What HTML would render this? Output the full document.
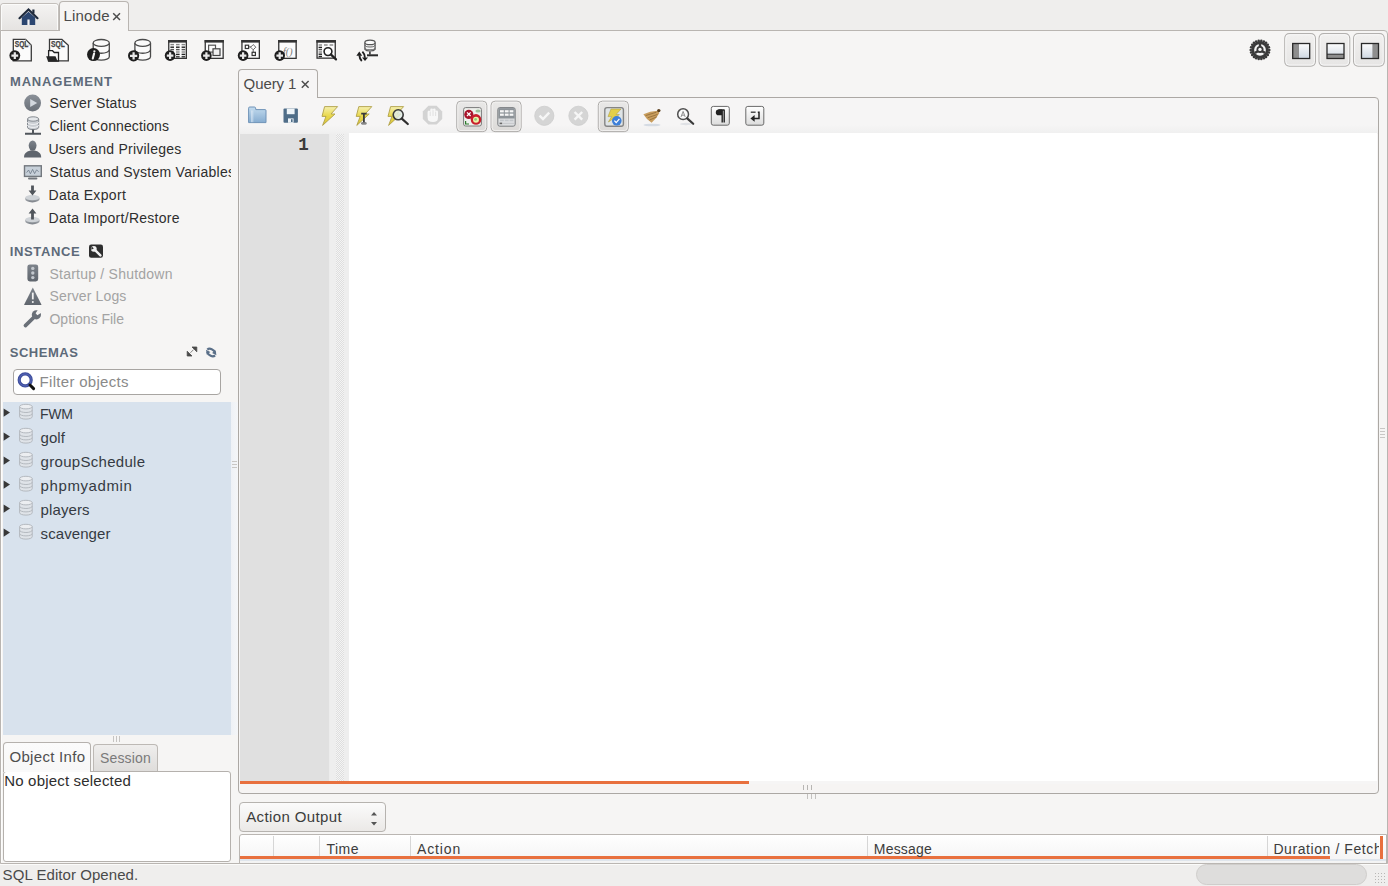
<!DOCTYPE html>
<html><head><meta charset="utf-8">
<style>
html,body{margin:0;padding:0}
body{width:1388px;height:886px;overflow:hidden;position:relative;background:#efeeed;font-family:"Liberation Sans",sans-serif}
.a{position:absolute;box-sizing:border-box}
.t{position:absolute;white-space:nowrap;font-family:"Liberation Sans",sans-serif}
svg{position:absolute;overflow:visible}
</style></head><body>
<!-- tab bar -->
<div class="a" style="left:0;top:0;width:1388px;height:31px;background:#efeeed"></div>
<div class="a" style="left:0;top:3px;width:59px;height:28px;border:1px solid #c3bfbb;border-bottom:none;border-radius:4px 4px 0 0;background:linear-gradient(#f4f3f2,#e5e3e1)"></div>
<div class="a" style="left:1px;top:4px;width:57px;height:26px;border:1px solid #fbfbfa;border-bottom:none;border-radius:3px 3px 0 0;"></div>
<!-- main frame -->
<div class="a" style="left:0;top:30px;width:1388px;height:834px;border:1px solid #b9b5b1;border-radius:0 4px 0 0;background:#f6f5f4"></div>
<div class="a" style="left:1px;top:31px;width:1px;height:831px;background:#fdfdfc"></div>
<!-- Linode tab -->
<div class="a" style="left:59px;top:1px;width:70px;height:30px;border:1px solid #b9b5b1;border-bottom:none;border-radius:4px 4px 0 0;background:#f6f5f4"></div>
<div class="a" style="left:60px;top:30px;width:68px;height:2px;background:#f6f5f4"></div>

<!-- sidebar -->
<div class="a" style="left:231px;top:402px;width:7px;height:333px;background:linear-gradient(90deg,#eef1f6,#f5f6f8)"></div>
<div class="a" style="left:3px;top:402px;width:228px;height:333px;background:#d8e2ed"></div>
<div class="a" style="left:13px;top:369px;width:208px;height:26px;border:1px solid #a8a5a2;border-radius:4px;background:#fff"></div>
<!-- object info / session tabs -->
<div class="a" style="left:93px;top:744px;width:65px;height:28px;border:1px solid #bdb9b5;border-bottom:none;border-radius:4px 4px 0 0;background:linear-gradient(#efeeed,#dedcda)"></div>
<div class="a" style="left:3px;top:771px;width:228px;height:91px;border:1px solid #b5b1ad;border-radius:3px;background:#fff"></div>
<div class="a" style="left:3px;top:742px;width:88px;height:30px;border:1px solid #b5b1ad;border-bottom:none;border-radius:4px 4px 0 0;background:linear-gradient(#fbfbfb,#f7f7f7)"></div>
<div class="a" style="left:4px;top:770px;width:86px;height:2px;background:#fafafa"></div>
<!-- splitter grip sidebar bottom -->
<div class="a" style="left:113px;top:736px;width:9px;height:6px;background:repeating-linear-gradient(90deg,#c6c4c2 0 1px,transparent 1px 3px)"></div>
<div class="a" style="left:232px;top:461px;width:5px;height:9px;background:repeating-linear-gradient(180deg,#c9c7c5 0 1px,transparent 1px 3px)"></div>

<!-- query tab + editor frame -->
<div class="a" style="left:238px;top:97px;width:1141px;height:697px;border:1px solid #aca8a4;border-radius:0 4px 4px 4px;background:#f6f5f5"></div>
<div class="a" style="left:238px;top:69px;width:80px;height:29px;border:1px solid #afaba7;border-bottom:none;border-radius:4px 4px 0 0;background:#f6f5f5"></div>
<div class="a" style="left:239px;top:96px;width:78px;height:3px;background:#f6f5f5"></div>
<div class="a" style="left:239px;top:125px;width:1139px;height:9px;background:linear-gradient(#f6f5f5,#efefef)"></div>
<!-- editor -->
<div class="a" style="left:349px;top:133px;width:1028px;height:648px;background:#fff"></div>
<div class="a" style="left:240px;top:134px;width:90px;height:647px;background:#e0e0e0"></div>
<div class="a" style="left:330px;top:134px;width:19px;height:647px;background:#eeeeee"></div><div class="a" style="left:329px;top:134px;width:1px;height:647px;background:#ececec"></div>
<div class="a" style="left:336px;top:134px;width:8px;height:647px;background-image:linear-gradient(45deg,#dedede 25%,transparent 25%,transparent 75%,#dedede 75%),linear-gradient(45deg,#dedede 25%,transparent 25%,transparent 75%,#dedede 75%);background-size:2px 2px;background-position:0 0,1px 1px;background-color:#f4f4f4"></div>
<div class="a" style="left:240px;top:781px;width:509px;height:3px;background:#e8703e"></div>
<div class="a" style="left:240px;top:784px;width:1136px;height:8px;background:#f6f4f3"></div>
<!-- splitter grips -->
<div class="a" style="left:803px;top:785px;width:9px;height:5px;background:repeating-linear-gradient(90deg,#b7b5b3 0 1px,transparent 1px 4px)"></div>
<div class="a" style="left:807px;top:794px;width:9px;height:5px;background:repeating-linear-gradient(90deg,#c3c1bf 0 1px,transparent 1px 4px)"></div>

<!-- action output combo -->
<div class="a" style="left:239px;top:802px;width:147px;height:30px;border:1px solid #b6b3af;border-radius:4px;background:linear-gradient(#fbfbfb,#ebe9e7)"></div>
<svg style="left:370px;top:811px" width="9" height="16"><path d="M1 4.5 L4 1 L7 4.5Z M1 11 L4 14.5 L7 11Z" fill="#555"/></svg>
<!-- output table -->
<div class="a" style="left:239px;top:834px;width:1148px;height:30px;border:1px solid #bab6b2;border-radius:3px 0 0 0;background:linear-gradient(#ffffff,#f3f3f3)"></div>
<div class="a" style="left:273px;top:836px;width:1px;height:21px;background:#d6d6d6"></div>
<div class="a" style="left:319px;top:836px;width:1px;height:21px;background:#d6d6d6"></div>
<div class="a" style="left:410px;top:836px;width:1px;height:21px;background:#d6d6d6"></div>
<div class="a" style="left:867px;top:836px;width:1px;height:21px;background:#d6d6d6"></div>
<div class="a" style="left:1267px;top:836px;width:1px;height:21px;background:#d6d6d6"></div>
<div class="a" style="left:240px;top:856px;width:1090px;height:3px;background:#e8703e"></div>
<div class="a" style="left:1380px;top:836px;width:3px;height:23px;background:#e8703e"></div>
<div class="a" style="left:240px;top:859px;width:1146px;height:2px;background:#dfe5ec"></div>
<div class="a" style="left:0;top:864px;width:1388px;height:1px;background:#fbfbfa"></div>
<!-- status bar -->
<div class="a" style="left:1196px;top:864px;width:171px;height:21px;border:1px solid #cfcdcb;border-radius:11px;background:#dedddc"></div>
<div class="a" style="left:1374px;top:872px;width:13px;height:13px;background:radial-gradient(circle,#b9b7b5 0.6px,transparent 0.9px);background-size:3px 3px"></div>

<div class="a" style="left:1380px;top:428px;width:5px;height:11px;background:repeating-linear-gradient(180deg,#c9c7c5 0 1px,transparent 1px 3px)"></div>
<svg style="left:0;top:0" width="1388" height="886" viewBox="0 0 1388 886"><path d="M19.5 18.2 L28.5 9.5 L37.5 18.2" fill="none" stroke="#1f2a3c" stroke-width="2.2" stroke-linecap="round"/><rect x="32.3" y="9.5" width="2.2" height="4" fill="#1f2a3c"/><path d="M21.8 17.5 L28.5 11.8 L35.2 17.5 V25 H21.8 Z" fill="#2c4670"/><rect x="27.4" y="19.5" width="2.2" height="5.5" fill="#f4f4f6"/><path d="M13.3 39.4 H25.6 L31.3 45.2 V60.9 H13.3 Z" fill="#fbfbfb" stroke="#3a3a3a" stroke-width="1.3"/><path d="M25.6 39.4 V45.2 H31.3" fill="none" stroke="#bbb" stroke-width="0.8"/><text x="14.8" y="47.1" font-family="Liberation Sans" font-weight="700" font-size="8.6" fill="#444" stroke="#444" stroke-width="0.25" textLength="13.6" lengthAdjust="spacingAndGlyphs">SQL</text><circle cx="14.8" cy="55.6" r="5.4" fill="#1e1e1e"/><path d="M14.8 52.2 V59.0 M11.4 55.6 H18.200000000000003" stroke="#e8e8e8" stroke-width="2.2"/><path d="M49.5 39.4 H61.9 L68.3 45.2 V60.9 H49.5 Z" fill="#fbfbfb" stroke="#3a3a3a" stroke-width="1.3"/><text x="51" y="47.1" font-family="Liberation Sans" font-weight="700" font-size="8.6" fill="#444" stroke="#444" stroke-width="0.25" textLength="13.8" lengthAdjust="spacingAndGlyphs">SQL</text><path d="M48.6 61 V50.7 H52.5 L54.3 52.5 H58.5 V61 Z" fill="#fbfbfb" stroke="#222" stroke-width="1.3"/><path d="M46.2 56.3 H55.5 L57.6 61.2 H48 Z" fill="#262626"/><path d="M93.2 42.9 V56.800000000000004 A8.049999999999997 3.4 0 0 0 109.3 56.800000000000004 V42.9" fill="#fafafa" stroke="#4a4a4a" stroke-width="1.3"/><ellipse cx="101.25" cy="42.9" rx="8.049999999999997" ry="3.4" fill="#fafafa" stroke="#4a4a4a" stroke-width="1.3"/><path d="M93.2 49.85 A8.049999999999997 3.4 0 0 0 109.3 49.85" fill="none" stroke="#4a4a4a" stroke-width="1.3"/><circle cx="93.5" cy="54.6" r="6.5" fill="#1e1e1e"/><circle cx="94.4" cy="51.3" r="1.15" fill="#f2f2f2"/><path d="M94.1 53.6 L92.8 58.6" stroke="#f2f2f2" stroke-width="2.1" stroke-linecap="round"/><path d="M134.9 42.9 V56.800000000000004 A7.799999999999997 3.4 0 0 0 150.5 56.800000000000004 V42.9" fill="#fafafa" stroke="#4a4a4a" stroke-width="1.3"/><ellipse cx="142.7" cy="42.9" rx="7.799999999999997" ry="3.4" fill="#fafafa" stroke="#4a4a4a" stroke-width="1.3"/><path d="M134.9 49.85 A7.799999999999997 3.4 0 0 0 150.5 49.85" fill="none" stroke="#4a4a4a" stroke-width="1.3"/><circle cx="133.6" cy="55.8" r="5.6" fill="#1e1e1e"/><path d="M133.6 52.199999999999996 V59.4 M130.0 55.8 H137.2" stroke="#e8e8e8" stroke-width="2.2"/><rect x="168.75" y="40.65" width="17.600000000000005" height="17.7" fill="#fbfbfb" stroke="#333" stroke-width="1.3"/><rect x="168.1" y="40" width="18.900000000000006" height="2.6" fill="#333"/><rect x="170.4" y="43.9" width="3.6" height="1.4" fill="#888"/><rect x="176" y="43.9" width="3.6" height="1.4" fill="#888"/><rect x="181.6" y="43.9" width="3.6" height="1.4" fill="#888"/><rect x="170.4" y="46.5" width="3.6" height="1.4" fill="#222"/><rect x="176" y="46.5" width="3.6" height="1.4" fill="#222"/><rect x="181.6" y="46.5" width="3.6" height="1.4" fill="#222"/><rect x="170.4" y="48.9" width="3.6" height="1.4" fill="#555"/><rect x="176" y="48.9" width="3.6" height="1.4" fill="#555"/><rect x="181.6" y="48.9" width="3.6" height="1.4" fill="#555"/><rect x="170.4" y="51.3" width="3.6" height="1.4" fill="#888"/><rect x="176" y="51.3" width="3.6" height="1.4" fill="#888"/><rect x="181.6" y="51.3" width="3.6" height="1.4" fill="#888"/><rect x="170.4" y="53.699999999999996" width="3.6" height="1.4" fill="#222"/><rect x="176" y="53.699999999999996" width="3.6" height="1.4" fill="#222"/><rect x="181.6" y="53.699999999999996" width="3.6" height="1.4" fill="#222"/><rect x="170.4" y="56.099999999999994" width="3.6" height="1.4" fill="#333"/><rect x="176" y="56.099999999999994" width="3.6" height="1.4" fill="#333"/><rect x="181.6" y="56.099999999999994" width="3.6" height="1.4" fill="#333"/><circle cx="170.1" cy="55.6" r="5.3" fill="#1e1e1e"/><path d="M170.1 52.300000000000004 V58.9 M166.79999999999998 55.6 H173.4" stroke="#e8e8e8" stroke-width="2.2"/><rect x="205.25" y="40.65" width="17.900000000000016" height="17.7" fill="#fbfbfb" stroke="#333" stroke-width="1.3"/><rect x="204.6" y="40" width="19.200000000000017" height="2.6" fill="#333"/><rect x="208.6" y="45.2" width="6.9" height="6.9" fill="none" stroke="#555" stroke-width="1.2"/><rect x="213" y="48.8" width="7" height="6.7" fill="#f0f0f0" stroke="#444" stroke-width="1.2"/><circle cx="206.4" cy="55.6" r="5.3" fill="#1e1e1e"/><path d="M206.4 52.300000000000004 V58.9 M203.1 55.6 H209.70000000000002" stroke="#e8e8e8" stroke-width="2.2"/><rect x="241.95000000000002" y="40.65" width="17.399999999999988" height="17.7" fill="#fbfbfb" stroke="#333" stroke-width="1.3"/><rect x="241.3" y="40" width="18.69999999999999" height="2.6" fill="#333"/><rect x="245.3" y="45.2" width="3.3" height="3.3" fill="#fff" stroke="#333" stroke-width="1.2"/><path d="M248.6 46.9 H251 M253.2 44.6 L255.8 47.2 L253.2 49.8 L250.6 47.2 Z M253.2 49.8 V52.2" fill="none" stroke="#555" stroke-width="0.9"/><rect x="252.1" y="52.3" width="3.3" height="3.2" fill="#fff" stroke="#333" stroke-width="1.2"/><circle cx="243.1" cy="55.6" r="5.3" fill="#1e1e1e"/><path d="M243.1 52.300000000000004 V58.9 M239.79999999999998 55.6 H246.4" stroke="#e8e8e8" stroke-width="2.2"/><rect x="278.75" y="40.65" width="17.399999999999988" height="17.7" fill="#fbfbfb" stroke="#333" stroke-width="1.3"/><rect x="278.1" y="40" width="18.69999999999999" height="2.6" fill="#333"/><text x="283" y="55" font-family="Liberation Serif" font-style="italic" font-size="10" fill="#777" textLength="9.5" lengthAdjust="spacingAndGlyphs">f()</text><circle cx="279.7" cy="55.6" r="5.3" fill="#1e1e1e"/><path d="M279.7 52.300000000000004 V58.9 M276.4 55.6 H283.0" stroke="#e8e8e8" stroke-width="2.2"/><rect x="317.04999999999995" y="40.75" width="18.2" height="17.399999999999995" fill="#fbfbfb" stroke="#333" stroke-width="1.3"/><rect x="316.4" y="40.1" width="19.5" height="2.6" fill="#333"/><rect x="318.6" y="44.3" width="3.4" height="1.4" fill="#888"/><rect x="318.6" y="46.699999999999996" width="3.4" height="1.4" fill="#222"/><rect x="318.6" y="48.9" width="3.4" height="1.4" fill="#555"/><rect x="318.6" y="51.3" width="3.4" height="1.4" fill="#888"/><rect x="318.6" y="53.5" width="3.4" height="1.4" fill="#222"/><rect x="318.6" y="55.8" width="3.4" height="1.4" fill="#222"/><rect x="324" y="44.3" width="3.6" height="1.4" fill="#888"/><rect x="329.6" y="44.3" width="3.6" height="1.4" fill="#888"/><circle cx="328" cy="51.6" r="3.9" fill="#fff" stroke="#222" stroke-width="1.6"/><path d="M330.8 54.4 L336 59.4" stroke="#222" stroke-width="2.2" stroke-linecap="round"/><path d="M364.9 42.4 V49.4 A5.4 2.4 0 0 0 375.1 49.4 V42.4" fill="#f6f6f6" stroke="#555" stroke-width="1.2"/><ellipse cx="370" cy="42.4" rx="5.1" ry="2.2" fill="#fbfbfb" stroke="#555" stroke-width="1.2"/><path d="M364.9 44.8 A5.1 2.2 0 0 0 375.1 44.8 M364.9 47.6 A5.1 2.2 0 0 0 375.1 47.6" fill="none" stroke="#666" stroke-width="1"/><path d="M369.9 51.6 V54.6" stroke="#333" stroke-width="1.6"/><path d="M367 55.3 H378" stroke="#2a2a2a" stroke-width="2"/><path d="M356.4 55.8 L359.3 51.4 L362.2 55.8 Z" fill="#1e1e1e"/><path d="M359.4 55.4 Q359.6 59 361.8 61" fill="none" stroke="#1e1e1e" stroke-width="1.9"/><path d="M362 57.4 L365 61 L368 57.4 Z" fill="#1e1e1e"/><path d="M364.9 57.8 Q364.6 53.6 362.4 51.6" fill="none" stroke="#1e1e1e" stroke-width="1.9"/><g><circle cx="1269.30" cy="49.90" r="1.25" fill="#3a3a3a"/><circle cx="1268.92" cy="52.52" r="1.25" fill="#3a3a3a"/><circle cx="1267.82" cy="54.93" r="1.25" fill="#3a3a3a"/><circle cx="1266.09" cy="56.93" r="1.25" fill="#3a3a3a"/><circle cx="1263.86" cy="58.36" r="1.25" fill="#3a3a3a"/><circle cx="1261.32" cy="59.11" r="1.25" fill="#3a3a3a"/><circle cx="1258.68" cy="59.11" r="1.25" fill="#3a3a3a"/><circle cx="1256.14" cy="58.36" r="1.25" fill="#3a3a3a"/><circle cx="1253.91" cy="56.93" r="1.25" fill="#3a3a3a"/><circle cx="1252.18" cy="54.93" r="1.25" fill="#3a3a3a"/><circle cx="1251.08" cy="52.52" r="1.25" fill="#3a3a3a"/><circle cx="1250.70" cy="49.90" r="1.25" fill="#3a3a3a"/><circle cx="1251.08" cy="47.28" r="1.25" fill="#3a3a3a"/><circle cx="1252.18" cy="44.87" r="1.25" fill="#3a3a3a"/><circle cx="1253.91" cy="42.87" r="1.25" fill="#3a3a3a"/><circle cx="1256.14" cy="41.44" r="1.25" fill="#3a3a3a"/><circle cx="1258.68" cy="40.69" r="1.25" fill="#3a3a3a"/><circle cx="1261.32" cy="40.69" r="1.25" fill="#3a3a3a"/><circle cx="1263.86" cy="41.44" r="1.25" fill="#3a3a3a"/><circle cx="1266.09" cy="42.87" r="1.25" fill="#3a3a3a"/><circle cx="1267.82" cy="44.87" r="1.25" fill="#3a3a3a"/><circle cx="1268.92" cy="47.28" r="1.25" fill="#3a3a3a"/><circle cx="1260" cy="49.9" r="8.9" fill="#3a3a3a"/><circle cx="1260" cy="49.9" r="5.9" fill="#f4f4f4"/><path d="M1260 44 V47.4 M1255 52.9 L1257.8 51.3 M1265 52.9 L1262.2 51.3" stroke="#3a3a3a" stroke-width="2.4"/><circle cx="1260" cy="49.6" r="3.5" fill="#3a3a3a"/><circle cx="1260" cy="49.4" r="1.7" fill="#f4f4f4"/></g><defs><linearGradient id="gLay" x1="0" y1="0" x2="0" y2="1"><stop offset="0" stop-color="#f1f0ef"/><stop offset="1" stop-color="#e6e5e4"/></linearGradient></defs><rect x="1284.8" y="33.7" width="30.6" height="32.4" rx="4.5" fill="url(#gLay)" stroke="#b3b1af" stroke-width="1.2"/><rect x="1285.8" y="34.7" width="28.6" height="30.4" rx="3.5" fill="none" stroke="#f9f9f9" stroke-width="1"/><defs><linearGradient id="scrL" x1="0" y1="0" x2="0" y2="1"><stop offset="0" stop-color="#fdfdfd"/><stop offset="1" stop-color="#cfd8e2"/></linearGradient></defs><rect x="1292.6999999999998" y="43.5" width="17" height="15" fill="url(#scrL)"/><rect x="1292.6999999999998" y="43.5" width="6.3" height="15" fill="#8e8e8e"/><rect x="1292.6999999999998" y="43.5" width="17" height="15" fill="none" stroke="#2a2a2a" stroke-width="1.3"/><rect x="1319.1" y="33.7" width="30.6" height="32.4" rx="4.5" fill="url(#gLay)" stroke="#b3b1af" stroke-width="1.2"/><rect x="1320.1" y="34.7" width="28.6" height="30.4" rx="3.5" fill="none" stroke="#f9f9f9" stroke-width="1"/><defs><linearGradient id="scrB" x1="0" y1="0" x2="0" y2="1"><stop offset="0" stop-color="#fdfdfd"/><stop offset="1" stop-color="#cfd8e2"/></linearGradient></defs><rect x="1326.9999999999998" y="43.5" width="17" height="15" fill="url(#scrB)"/><rect x="1326.9999999999998" y="54.2" width="17" height="4.3" fill="#8e8e8e"/><rect x="1326.9999999999998" y="43.5" width="17" height="15" fill="none" stroke="#2a2a2a" stroke-width="1.3"/><path d="M1326.9999999999998 54.2 H1343.9999999999998" stroke="#2a2a2a" stroke-width="1"/><rect x="1353.6" y="33.7" width="30.6" height="32.4" rx="4.5" fill="url(#gLay)" stroke="#b3b1af" stroke-width="1.2"/><rect x="1354.6" y="34.7" width="28.6" height="30.4" rx="3.5" fill="none" stroke="#f9f9f9" stroke-width="1"/><defs><linearGradient id="scrR" x1="0" y1="0" x2="0" y2="1"><stop offset="0" stop-color="#fdfdfd"/><stop offset="1" stop-color="#cfd8e2"/></linearGradient></defs><rect x="1361.4999999999998" y="43.5" width="17" height="15" fill="url(#scrR)"/><rect x="1372.3999999999999" y="43.5" width="6.1" height="15" fill="#8e8e8e"/><rect x="1361.4999999999998" y="43.5" width="17" height="15" fill="none" stroke="#2a2a2a" stroke-width="1.3"/><path d="M113.2 13.2 L120 20 M120 13.2 L113.2 20" stroke="#4e4e4e" stroke-width="1.5"/><path d="M301.8 81 L308.6 87.8 M308.6 81 L301.8 87.8" stroke="#4e4e4e" stroke-width="1.5"/><defs><linearGradient id="gPlay" x1="0" y1="0" x2="0" y2="1"><stop offset="0" stop-color="#8a9098"/><stop offset="1" stop-color="#6a7078"/></linearGradient><linearGradient id="gGray" x1="0" y1="0" x2="0" y2="1"><stop offset="0" stop-color="#7d838b"/><stop offset="1" stop-color="#5f656d"/></linearGradient><linearGradient id="gDisk" x1="0" y1="0" x2="0" y2="1"><stop offset="0" stop-color="#d0d3d7"/><stop offset="1" stop-color="#7a7f86"/></linearGradient></defs><circle cx="32.6" cy="103" r="8.4" fill="url(#gPlay)"/><path d="M30.2 99 L37.2 103 L30.2 107 Z" fill="#d3d8de"/><path d="M27.5 119 V127.4 A5.6 2.2 0 0 0 38.7 127.4 V119" fill="#c9cdd2" stroke="#868b91" stroke-width="1"/><ellipse cx="33.1" cy="119" rx="5.6" ry="2.2" fill="#e4e7ea" stroke="#868b91" stroke-width="1"/><path d="M27.5 122.2 A5.6 2.2 0 0 0 38.7 122.2 M27.5 125.2 A5.6 2.2 0 0 0 38.7 125.2" fill="none" stroke="#f2f3f5" stroke-width="1"/><path d="M33 129.6 V133.8 M25 133.8 H41" stroke="#50555b" stroke-width="2"/><ellipse cx="32.6" cy="145.6" rx="3.9" ry="5.2" fill="url(#gGray)"/><path d="M24 157.4 C24 153 27 151.6 30.3 150.6 H34.9 C38.2 151.6 41.2 153 41.2 157.4 Z" fill="#5f656d"/><rect x="24.5" y="165.8" width="16.8" height="10.6" fill="#c7d0d9" stroke="#73787e" stroke-width="1.4"/><path d="M26.6 172.6 L28.6 170 L30.4 173.8 L32.6 169.4 L34.6 173.6 L36.6 169.8 L38.6 171.8" fill="none" stroke="#6d7a88" stroke-width="0.8"/><rect x="28" y="177.5" width="9.4" height="2" rx="1" fill="#73787e"/><ellipse cx="32.4" cy="198.8" rx="7.3" ry="3.6" fill="url(#gDisk)"/><ellipse cx="32.4" cy="197.6" rx="7.1" ry="2.6" fill="#cfd3d7"/><path d="M31.1 185.6 H33.9 V190.6 H36.4 L32.5 195.6 L28.6 190.6 H31.1 Z" fill="#50555b"/><ellipse cx="32.4" cy="220.8" rx="7.3" ry="3.6" fill="url(#gDisk)"/><ellipse cx="32.4" cy="219.6" rx="7.1" ry="2.6" fill="#cfd3d7"/><path d="M31.1 219.4 H33.9 V213.4 H36.4 L32.5 208.4 L28.6 213.4 H31.1 Z" fill="#50555b"/><rect x="89" y="244.6" width="14" height="13.2" rx="2.2" fill="#2e2e2e"/><path d="M94.8 249.8 L100.4 255.4" stroke="#f2f2f2" stroke-width="2.4" stroke-linecap="round"/><circle cx="93.8" cy="248.8" r="2.9" fill="#f2f2f2"/><path d="M91.6 246.2 L93.8 248.6 L91.2 249.8 Z" fill="#2e2e2e"/><rect x="27.4" y="264.4" width="10.8" height="17" rx="2.4" fill="url(#gGray)"/><circle cx="32.8" cy="268.4" r="1.7" fill="#c3c8ce"/><circle cx="32.8" cy="273" r="1.7" fill="#c3c8ce"/><circle cx="32.8" cy="277.6" r="1.7" fill="#c3c8ce"/><path d="M32.8 287.6 L41.4 304.4 Q41.6 305 41 305 H24.6 Q24 305 24.2 304.4 Z" fill="url(#gGray)"/><path d="M32.8 292.6 V299.4" stroke="#f2f2f2" stroke-width="1.8"/><circle cx="32.8" cy="302" r="1" fill="#f2f2f2"/><path d="M25.4 325.6 L33.6 317.6" stroke="#6a7078" stroke-width="3.6" stroke-linecap="round"/><circle cx="36.4" cy="314.8" r="4.6" fill="#6a7078"/><path d="M38.2 309.6 L35.6 313.2 L37.4 315.2 L41.6 312.6 Z" fill="#f6f5f4"/><path d="M192 347 H196.8 V351.8 Z M187.2 356 V351.2 L192 356 Z" fill="#4a4a4a" stroke="#4a4a4a" stroke-width="0.8"/><path d="M190.4 352.8 L193.6 349.6" stroke="#777" stroke-width="0.9"/><g transform="rotate(38 211.2 352.5)"><path d="M206.4 352.6 A4.8 3.6 0 0 1 214.6 350.4" fill="none" stroke="#5a6f88" stroke-width="2.2"/><path d="M213.2 348 L217 351.4 L212.2 352.4 Z" fill="#5a6f88"/><path d="M216 352.4 A4.8 3.6 0 0 1 207.8 354.6" fill="none" stroke="#5a6f88" stroke-width="2.2"/><path d="M209.2 357 L205.4 353.6 L210.2 352.6 Z" fill="#5a6f88"/></g><circle cx="25.2" cy="379.9" r="6" fill="none" stroke="#3f4f9d" stroke-width="3.2"/><circle cx="25.2" cy="379.9" r="6" fill="none" stroke="#6a7ad0" stroke-width="0.8" opacity="0.6"/><path d="M30 385 L33.6 388.6" stroke="#111" stroke-width="3" stroke-linecap="round"/><path d="M3.6 408.40000000000003 L10 412.6 L3.6 416.8 Z" fill="#383838"/><path d="M19.6 406.59999999999997 V416.8 A6.3 2.3 0 0 0 32.2 416.8 V406.59999999999997" fill="#dfe3e8" stroke="#b4b9bf" stroke-width="1"/><ellipse cx="25.9" cy="406.59999999999997" rx="6.3" ry="2.3" fill="#eceef1" stroke="#b4b9bf" stroke-width="1"/><path d="M19.6 410.2 A6.3 2.3 0 0 0 32.2 410.2 M19.6 413.59999999999997 A6.3 2.3 0 0 0 32.2 413.59999999999997" fill="none" stroke="#b4b9bf" stroke-width="1"/><path d="M3.6 432.40000000000003 L10 436.6 L3.6 440.8 Z" fill="#383838"/><path d="M19.6 430.59999999999997 V440.8 A6.3 2.3 0 0 0 32.2 440.8 V430.59999999999997" fill="#dfe3e8" stroke="#b4b9bf" stroke-width="1"/><ellipse cx="25.9" cy="430.59999999999997" rx="6.3" ry="2.3" fill="#eceef1" stroke="#b4b9bf" stroke-width="1"/><path d="M19.6 434.2 A6.3 2.3 0 0 0 32.2 434.2 M19.6 437.59999999999997 A6.3 2.3 0 0 0 32.2 437.59999999999997" fill="none" stroke="#b4b9bf" stroke-width="1"/><path d="M3.6 456.40000000000003 L10 460.6 L3.6 464.8 Z" fill="#383838"/><path d="M19.6 454.59999999999997 V464.8 A6.3 2.3 0 0 0 32.2 464.8 V454.59999999999997" fill="#dfe3e8" stroke="#b4b9bf" stroke-width="1"/><ellipse cx="25.9" cy="454.59999999999997" rx="6.3" ry="2.3" fill="#eceef1" stroke="#b4b9bf" stroke-width="1"/><path d="M19.6 458.2 A6.3 2.3 0 0 0 32.2 458.2 M19.6 461.59999999999997 A6.3 2.3 0 0 0 32.2 461.59999999999997" fill="none" stroke="#b4b9bf" stroke-width="1"/><path d="M3.6 480.40000000000003 L10 484.6 L3.6 488.8 Z" fill="#383838"/><path d="M19.6 478.59999999999997 V488.8 A6.3 2.3 0 0 0 32.2 488.8 V478.59999999999997" fill="#dfe3e8" stroke="#b4b9bf" stroke-width="1"/><ellipse cx="25.9" cy="478.59999999999997" rx="6.3" ry="2.3" fill="#eceef1" stroke="#b4b9bf" stroke-width="1"/><path d="M19.6 482.2 A6.3 2.3 0 0 0 32.2 482.2 M19.6 485.59999999999997 A6.3 2.3 0 0 0 32.2 485.59999999999997" fill="none" stroke="#b4b9bf" stroke-width="1"/><path d="M3.6 504.40000000000003 L10 508.6 L3.6 512.8000000000001 Z" fill="#383838"/><path d="M19.6 502.59999999999997 V512.8 A6.3 2.3 0 0 0 32.2 512.8 V502.59999999999997" fill="#dfe3e8" stroke="#b4b9bf" stroke-width="1"/><ellipse cx="25.9" cy="502.59999999999997" rx="6.3" ry="2.3" fill="#eceef1" stroke="#b4b9bf" stroke-width="1"/><path d="M19.6 506.2 A6.3 2.3 0 0 0 32.2 506.2 M19.6 509.59999999999997 A6.3 2.3 0 0 0 32.2 509.59999999999997" fill="none" stroke="#b4b9bf" stroke-width="1"/><path d="M3.6 528.4 L10 532.6 L3.6 536.8000000000001 Z" fill="#383838"/><path d="M19.6 526.6 V536.8000000000001 A6.3 2.3 0 0 0 32.2 536.8000000000001 V526.6" fill="#dfe3e8" stroke="#b4b9bf" stroke-width="1"/><ellipse cx="25.9" cy="526.6" rx="6.3" ry="2.3" fill="#eceef1" stroke="#b4b9bf" stroke-width="1"/><path d="M19.6 530.2 A6.3 2.3 0 0 0 32.2 530.2 M19.6 533.6 A6.3 2.3 0 0 0 32.2 533.6" fill="none" stroke="#b4b9bf" stroke-width="1"/><defs><linearGradient id="gFold" x1="0" y1="0" x2="0" y2="1"><stop offset="0" stop-color="#c4dcef"/><stop offset="1" stop-color="#86acd0"/></linearGradient><linearGradient id="gBolt" x1="0" y1="0" x2="0" y2="1"><stop offset="0" stop-color="#f6f0b0"/><stop offset="0.5" stop-color="#e9d84a"/><stop offset="1" stop-color="#d8c23a"/></linearGradient><linearGradient id="gTog" x1="0" y1="0" x2="0" y2="1"><stop offset="0" stop-color="#e9e8e7"/><stop offset="1" stop-color="#dcdad8"/></linearGradient><linearGradient id="gBox" x1="0" y1="0" x2="0" y2="1"><stop offset="0" stop-color="#ffffff"/><stop offset="1" stop-color="#dcdcdc"/></linearGradient></defs><path d="M248.6 122.6 V108.2 Q248.6 107 249.8 107 H254.4 Q255.4 107 255.6 108 L255.8 109.6 H265 Q266 109.6 266 110.6 V122.6 Z" fill="url(#gFold)" stroke="#7093b8" stroke-width="1"/><path d="M251.6 110.4 V122.2 M252.8 110.4 V122.2" stroke="#e6f0f8" stroke-width="0.6"/><rect x="283.5" y="108.4" width="14.4" height="14.4" rx="1" fill="#4f6d88"/><rect x="286.8" y="108.6" width="7.8" height="5.6" fill="#eef4f8"/><rect x="288" y="118.4" width="5.6" height="4.4" fill="#eef4f8"/><rect x="291" y="119.2" width="1.6" height="2.8" fill="#4f6d88"/><path d="M324.6 106.6 H337.6 L331 114 H335 L322.6 125.4 L326 116.4 H322 Z" fill="url(#gBolt)" stroke="#b0a048" stroke-width="0.9" stroke-linejoin="round"/><path d="M358.8 106.6 H371.8 L365.2 114 H369.2 L356.8 125.4 L360.2 116.4 H356.2 Z" fill="url(#gBolt)" stroke="#b0a048" stroke-width="0.9" stroke-linejoin="round"/><path d="M361.2 113.6 H366.6 M363.9 113.6 V123.4 M361.4 123.4 H366.4" stroke="#3a3a3a" stroke-width="1.8"/><ellipse cx="363.9" cy="123.4" rx="2.4" ry="1.2" fill="#888"/><path d="M390.6 106.6 H403.6 L397 114 H401 L388.6 125.4 L392 116.4 H388 Z" fill="url(#gBolt)" stroke="#b0a048" stroke-width="0.9" stroke-linejoin="round"/><circle cx="398.2" cy="114.8" r="5" fill="#e2ece6" fill-opacity="0.85" stroke="#3a3a3a" stroke-width="1.6"/><path d="M401.8 118.6 L407.8 124" stroke="#2e2e2e" stroke-width="2.2" stroke-linecap="round"/><path d="M428.4 105.8 H436.6 L442.2 111.4 V119 L436.6 124.6 H428.4 L422.8 119 V111.4 Z" fill="#d3d3d3"/><path d="M427.6 112 Q427.6 110.4 429 110.4 Q430.2 110.4 430.2 112 V110 Q430.2 108.6 431.6 108.6 Q433 108.6 433 110 V109.6 Q433 108.4 434.3 108.4 Q435.6 108.4 435.6 109.8 V111.6 Q435.6 110.6 436.8 110.6 Q438 110.6 438 112 V117.4 Q438 122 433 122 Q427.6 122 427.6 117.4 Z" fill="#f7f7f7"/><path d="M430.2 111.8 V116 M433 110.2 V116 M435.6 111.8 V116" stroke="#dadada" stroke-width="0.8"/><rect x="456.8" y="101.2" width="30" height="30.4" rx="4" fill="url(#gTog)" stroke="#a9a7a5" stroke-width="1"/><rect x="457.8" y="102.2" width="28" height="28.4" rx="3" fill="none" stroke="#f2f1f0" stroke-width="1"/><rect x="491.1" y="101.2" width="30" height="30.4" rx="4" fill="url(#gTog)" stroke="#a9a7a5" stroke-width="1"/><rect x="492.1" y="102.2" width="28" height="28.4" rx="3" fill="none" stroke="#f2f1f0" stroke-width="1"/><rect x="598.3" y="101.2" width="30.1" height="30.4" rx="4" fill="url(#gTog)" stroke="#a9a7a5" stroke-width="1"/><rect x="599.3" y="102.2" width="28.1" height="28.4" rx="3" fill="none" stroke="#f2f1f0" stroke-width="1"/><rect x="463.6" y="107.6" width="17.8" height="18.4" rx="2" fill="#eef0ec" stroke="#7a7a7a" stroke-width="1"/><ellipse cx="478" cy="111" rx="2.6" ry="1.6" fill="#9cc49c"/><circle cx="468.8" cy="114.4" r="4.6" fill="#a8142a"/><path d="M467 112.4 L470.6 116 M470.6 112.4 L467 116" stroke="#fff" stroke-width="1.3"/><circle cx="476" cy="119.4" r="5.3" fill="#c8202c"/><circle cx="476" cy="119.8" r="3" fill="#eef2a8"/><circle cx="475.6" cy="119.4" r="1.4" fill="#8fd07a"/><path d="M465.6 121 V124 H469" fill="none" stroke="#2a7a2a" stroke-width="1.2"/><rect x="497.8" y="107.6" width="17.4" height="18.6" rx="2" fill="#dcdee0" stroke="#7c7f82" stroke-width="1"/><rect x="498.3" y="108.1" width="16.4" height="10.4" fill="#8d9398"/><rect x="500" y="110.2" width="3.8" height="2.2" fill="#f6f6f6"/><rect x="500" y="113.6" width="3.8" height="2.2" fill="#f6f6f6"/><rect x="504.8" y="110.2" width="3.8" height="2.2" fill="#f6f6f6"/><rect x="504.8" y="113.6" width="3.8" height="2.2" fill="#f6f6f6"/><rect x="509.6" y="110.2" width="3.8" height="2.2" fill="#f6f6f6"/><rect x="509.6" y="113.6" width="3.8" height="2.2" fill="#f6f6f6"/><rect x="500" y="119.6" width="3.8" height="1.6" fill="#c2c6ca"/><rect x="504.8" y="119.6" width="3.8" height="1.6" fill="#c2c6ca"/><rect x="509.6" y="119.6" width="3.8" height="1.6" fill="#c2c6ca"/><rect x="499.6" y="122.6" width="2.6" height="1.6" fill="#666"/><path d="M503 123.4 H514" stroke="#c6c9cc" stroke-width="1"/><circle cx="544.3" cy="115.8" r="9.6" fill="#d5d5d5" stroke="#cdcdcd" stroke-width="0.8"/><path d="M539.6 115.6 L543 119 L549.2 112.6" fill="none" stroke="#f6f6f6" stroke-width="2.4"/><circle cx="578.4" cy="115.8" r="9.6" fill="#d5d5d5" stroke="#cdcdcd" stroke-width="0.8"/><path d="M574.6 112 L582.2 119.6 M582.2 112 L574.6 119.6" stroke="#f6f6f6" stroke-width="2.4"/><rect x="604.8" y="107.6" width="18.6" height="18.6" rx="2.2" fill="#dfe4e6" stroke="#858585" stroke-width="1.4"/><path d="M611 109 H621 L616 114.6 H619.4 L608.4 122 L611.6 116.6 H608 Z" fill="#e3cf48" stroke="#b0a048" stroke-width="0.6"/><circle cx="616.8" cy="120.8" r="4.8" fill="#3d7fd8"/><path d="M614.4 120.6 L616.2 122.6 L619.4 118.8" fill="none" stroke="#fff" stroke-width="1.3"/><ellipse cx="652" cy="125" rx="8.5" ry="1.3" fill="#cdd5de" opacity="0.8"/><path d="M643.4 114.2 Q650 111 657.6 110.8 L659.4 113 Q656.6 118.4 651.6 122.8 Q646.2 119.2 643.4 114.2 Z" fill="#c99e5e"/><path d="M645.6 115.6 L656.4 112.2 M647.6 117.8 L657.6 114.4 M649.6 120 L656.8 116.8" stroke="#8f6a36" stroke-width="0.8"/><circle cx="658.8" cy="110.6" r="1.7" fill="#5a3e1c"/><ellipse cx="686" cy="124" rx="6" ry="1.2" fill="#d5d9de" opacity="0.7"/><circle cx="683.1" cy="114.2" r="5.4" fill="#fbfbfb" stroke="#505050" stroke-width="1.5"/><path d="M681 117 L683.1 111.4 L685.2 117 M681.8 115.2 H684.4" fill="none" stroke="#777" stroke-width="0.8"/><path d="M687.2 118.4 L693.2 123.8" stroke="#3a3a3a" stroke-width="2.2" stroke-linecap="round"/><rect x="711.3" y="106.4" width="18" height="18.8" rx="2" fill="url(#gBox)" stroke="#6a6a6a" stroke-width="1"/><rect x="745.8" y="106.4" width="18" height="18.8" rx="2" fill="url(#gBox)" stroke="#6a6a6a" stroke-width="1"/><path d="M718.4 110 H724.6 M722.2 110 V122.6 M724.2 110 V122.6" stroke="#222" stroke-width="1.4"/><path d="M718.6 109.6 A2.8 2.8 0 0 0 718.6 115.2 H722 V109.6 Z" fill="#222"/><path d="M750.8 112.2 H755.6" stroke="#333" stroke-width="1.3"/><path d="M757.8 112.2 H759 V118.4 H753.8" fill="none" stroke="#222" stroke-width="1.5"/><path d="M750.4 118.4 L754.6 115 V121.8 Z" fill="#222"/><text x="298.2" y="150" font-family="Liberation Mono" font-weight="700" font-size="17.5" fill="#3a3a3a">1</text></svg>
<div class="t" style="left:63.50px;top:8.30px;font-size:15px;line-height:15px;font-weight:400;color:#4b4b4b;letter-spacing:0.200px">Linode</div>
<div class="t" style="left:10.00px;top:75.00px;font-size:13px;line-height:13px;font-weight:700;color:#5d6a79;letter-spacing:0.815px">MANAGEMENT</div>
<div class="t" style="left:49.50px;top:96.15px;font-size:14px;line-height:14px;font-weight:400;color:#2e2e2e;letter-spacing:0.191px">Server Status</div>
<div class="t" style="left:49.50px;top:119.15px;font-size:14px;line-height:14px;font-weight:400;color:#2e2e2e;letter-spacing:0.117px">Client Connections</div>
<div class="t" style="left:48.50px;top:142.15px;font-size:14px;line-height:14px;font-weight:400;color:#2e2e2e;letter-spacing:0.227px">Users and Privileges</div>
<div class="t" style="left:49.50px;top:165.15px;font-size:14px;line-height:14px;font-weight:400;color:#2e2e2e;letter-spacing:0.261px;width:181.5px;overflow:hidden">Status and System Variables</div>
<div class="t" style="left:48.50px;top:188.15px;font-size:14px;line-height:14px;font-weight:400;color:#2e2e2e;letter-spacing:0.337px">Data Export</div>
<div class="t" style="left:48.50px;top:211.15px;font-size:14px;line-height:14px;font-weight:400;color:#2e2e2e;letter-spacing:0.280px">Data Import/Restore</div>
<div class="t" style="left:9.70px;top:245.00px;font-size:13px;line-height:13px;font-weight:700;color:#5d6a79;letter-spacing:0.641px">INSTANCE</div>
<div class="t" style="left:49.50px;top:267.15px;font-size:14px;line-height:14px;font-weight:400;color:#a3a3a3;letter-spacing:0.230px">Startup / Shutdown</div>
<div class="t" style="left:49.50px;top:289.15px;font-size:14px;line-height:14px;font-weight:400;color:#a3a3a3;letter-spacing:0.132px">Server Logs</div>
<div class="t" style="left:49.50px;top:312.15px;font-size:14px;line-height:14px;font-weight:400;color:#a3a3a3;letter-spacing:-0.019px">Options File</div>
<div class="t" style="left:9.70px;top:346.00px;font-size:13px;line-height:13px;font-weight:700;color:#5d6a79;letter-spacing:0.527px">SCHEMAS</div>
<div class="t" style="left:39.60px;top:374.30px;font-size:15px;line-height:15px;font-weight:400;color:#8a8a8a;letter-spacing:0.298px">Filter objects</div>
<div class="t" style="left:39.90px;top:407.15px;font-size:14px;line-height:14px;font-weight:400;color:#353a42;letter-spacing:-0.183px">FWM</div>
<div class="t" style="left:40.60px;top:430.30px;font-size:15px;line-height:15px;font-weight:400;color:#353a42;letter-spacing:0.028px">golf</div>
<div class="t" style="left:40.60px;top:454.30px;font-size:15px;line-height:15px;font-weight:400;color:#353a42;letter-spacing:0.294px">groupSchedule</div>
<div class="t" style="left:40.60px;top:478.30px;font-size:15px;line-height:15px;font-weight:400;color:#353a42;letter-spacing:0.585px">phpmyadmin</div>
<div class="t" style="left:40.60px;top:502.30px;font-size:15px;line-height:15px;font-weight:400;color:#353a42;letter-spacing:0.091px">players</div>
<div class="t" style="left:40.60px;top:526.30px;font-size:15px;line-height:15px;font-weight:400;color:#353a42;letter-spacing:0.074px">scavenger</div>
<div class="t" style="left:9.50px;top:749.30px;font-size:15px;line-height:15px;font-weight:400;color:#4f4f4f;letter-spacing:0.300px">Object Info</div>
<div class="t" style="left:100.00px;top:751.15px;font-size:14px;line-height:14px;font-weight:400;color:#7a7a7a;letter-spacing:0.163px">Session</div>
<div class="t" style="left:4.20px;top:773.30px;font-size:15px;line-height:15px;font-weight:400;color:#2e2e2e;letter-spacing:0.190px">No object selected</div>
<div class="t" style="left:2.60px;top:867.30px;font-size:15px;line-height:15px;font-weight:400;color:#4a4a4a;letter-spacing:0.058px">SQL Editor Opened.</div>
<div class="t" style="left:243.60px;top:76.30px;font-size:15px;line-height:15px;font-weight:400;color:#4b4b4b;letter-spacing:-0.102px">Query 1</div>
<div class="t" style="left:246.20px;top:809.30px;font-size:15px;line-height:15px;font-weight:400;color:#3c3c3c;letter-spacing:0.382px">Action Output</div>
<div class="t" style="left:326.50px;top:842.15px;font-size:14px;line-height:14px;font-weight:400;color:#3c3c3c;letter-spacing:0.465px">Time</div>
<div class="t" style="left:417.00px;top:842.15px;font-size:14px;line-height:14px;font-weight:400;color:#3c3c3c;letter-spacing:0.855px">Action</div>
<div class="t" style="left:873.80px;top:842.15px;font-size:14px;line-height:14px;font-weight:400;color:#3c3c3c;letter-spacing:0.197px">Message</div>
<div class="t" style="left:1273.40px;top:842.15px;font-size:14px;line-height:14px;font-weight:400;color:#3c3c3c;letter-spacing:0.579px;width:105.6px;overflow:hidden">Duration / Fetch</div>
</body></html>
